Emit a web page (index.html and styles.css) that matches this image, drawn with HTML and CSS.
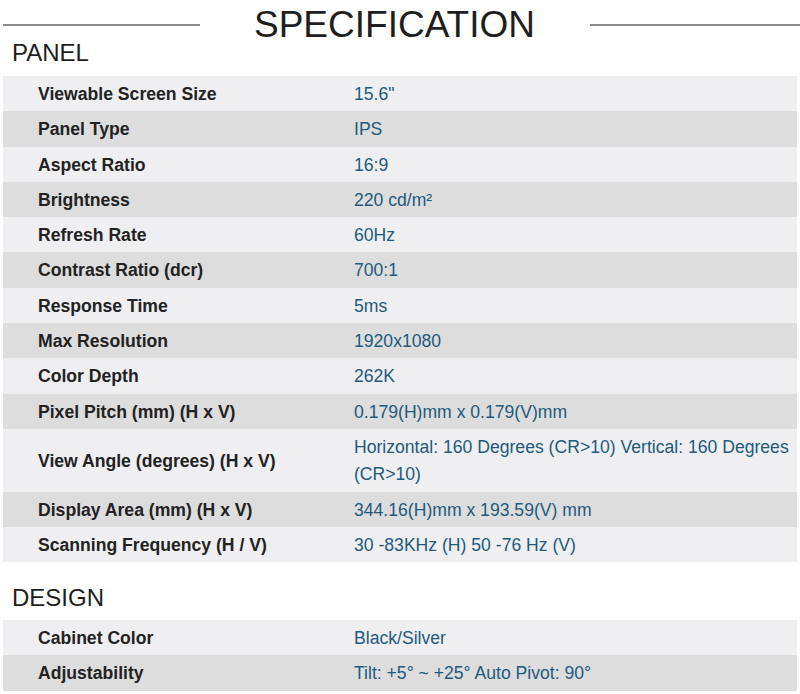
FILE: index.html
```html
<!DOCTYPE html>
<html lang="en">
<head>
<meta charset="utf-8">
<title>Specification</title>
<link rel="stylesheet" href="styles.css">
</head>
<body>
<div class="page">
  <header class="spec-header">
    <span class="rule rule-left"></span>
    <h1 class="spec-title">SPECIFICATION</h1>
    <span class="rule rule-right"></span>
  </header>

  <section class="group">
    <h2 class="group-title">PANEL</h2>
    <table class="spec-table">
      <tbody>
        <tr><th>Viewable Screen Size</th><td>15.6"</td></tr>
        <tr><th>Panel Type</th><td>IPS</td></tr>
        <tr><th>Aspect Ratio</th><td>16:9</td></tr>
        <tr><th>Brightness</th><td>220 cd/m²</td></tr>
        <tr><th>Refresh Rate</th><td>60Hz</td></tr>
        <tr><th>Contrast Ratio (dcr)</th><td>700:1</td></tr>
        <tr><th>Response Time</th><td>5ms</td></tr>
        <tr><th>Max Resolution</th><td>1920x1080</td></tr>
        <tr><th>Color Depth</th><td>262K</td></tr>
        <tr><th>Pixel Pitch (mm) (H x V)</th><td>0.179(H)mm x 0.179(V)mm</td></tr>
        <tr><th>View Angle (degrees) (H x V)</th><td>Horizontal: 160 Degrees (CR&gt;10) Vertical: 160 Degrees (CR&gt;10)</td></tr>
        <tr><th>Display Area (mm) (H x V)</th><td>344.16(H)mm x 193.59(V) mm</td></tr>
        <tr><th>Scanning Frequency (H / V)</th><td>30 -83KHz (H) 50 -76 Hz (V)</td></tr>
      </tbody>
    </table>
  </section>

  <section class="group group-design">
    <h2 class="group-title">DESIGN</h2>
    <table class="spec-table">
      <tbody>
        <tr><th>Cabinet Color</th><td>Black/Silver</td></tr>
        <tr><th>Adjustability</th><td>Tilt: +5° ~ +25° Auto Pivot: 90°</td></tr>
      </tbody>
    </table>
  </section>
</div>
</body>
</html>
```

FILE: styles.css
```css
html, body {
  margin: 0;
  padding: 0;
  background: #ffffff;
}

body {
  font-family: "Liberation Sans", Arial, sans-serif;
  color: #222222;
}

.page {
  padding: 11px 3px 0 3px;
  width: 800px;
  box-sizing: border-box;
}

.spec-header {
  display: flex;
  align-items: center;
  margin-right: -3px;
}

.rule {
  display: block;
  height: 2px;
  background: #8a8a8a;
}

.rule-left {
  width: 197px;
  flex: none;
}

.rule-right {
  flex: 1;
}

.spec-title {
  margin: 0 55px 0 54px;
  font-size: 37px;
  line-height: 28px;
  font-weight: normal;
  color: #1e1e1e;
  white-space: nowrap;
}

.group-title {
  margin: 0 0 9px 9px;
  font-size: 24px;
  line-height: 28px;
  font-weight: normal;
  color: #1e1e1e;
}

.group-design {
  margin-top: 22px;
}

.group-design .group-title {
  margin-bottom: 8px;
}

.spec-table {
  width: 794px;
  border-collapse: collapse;
  font-size: 17.6px;
  line-height: 27.3px;
}

.spec-table th,
.spec-table td {
  padding: 5px 0 3px 0;
  vertical-align: middle;
  text-align: left;
}

.spec-table th {
  width: 316px;
  padding-left: 35px;
  font-weight: bold;
  color: #222222;
}

.spec-table td {
  color: #225a7d;
  padding-right: 4px;
}

.spec-table tr:nth-child(odd) {
  background: #efeff1;
}

.spec-table tr:nth-child(even) {
  background: #dddddd;
}
```
